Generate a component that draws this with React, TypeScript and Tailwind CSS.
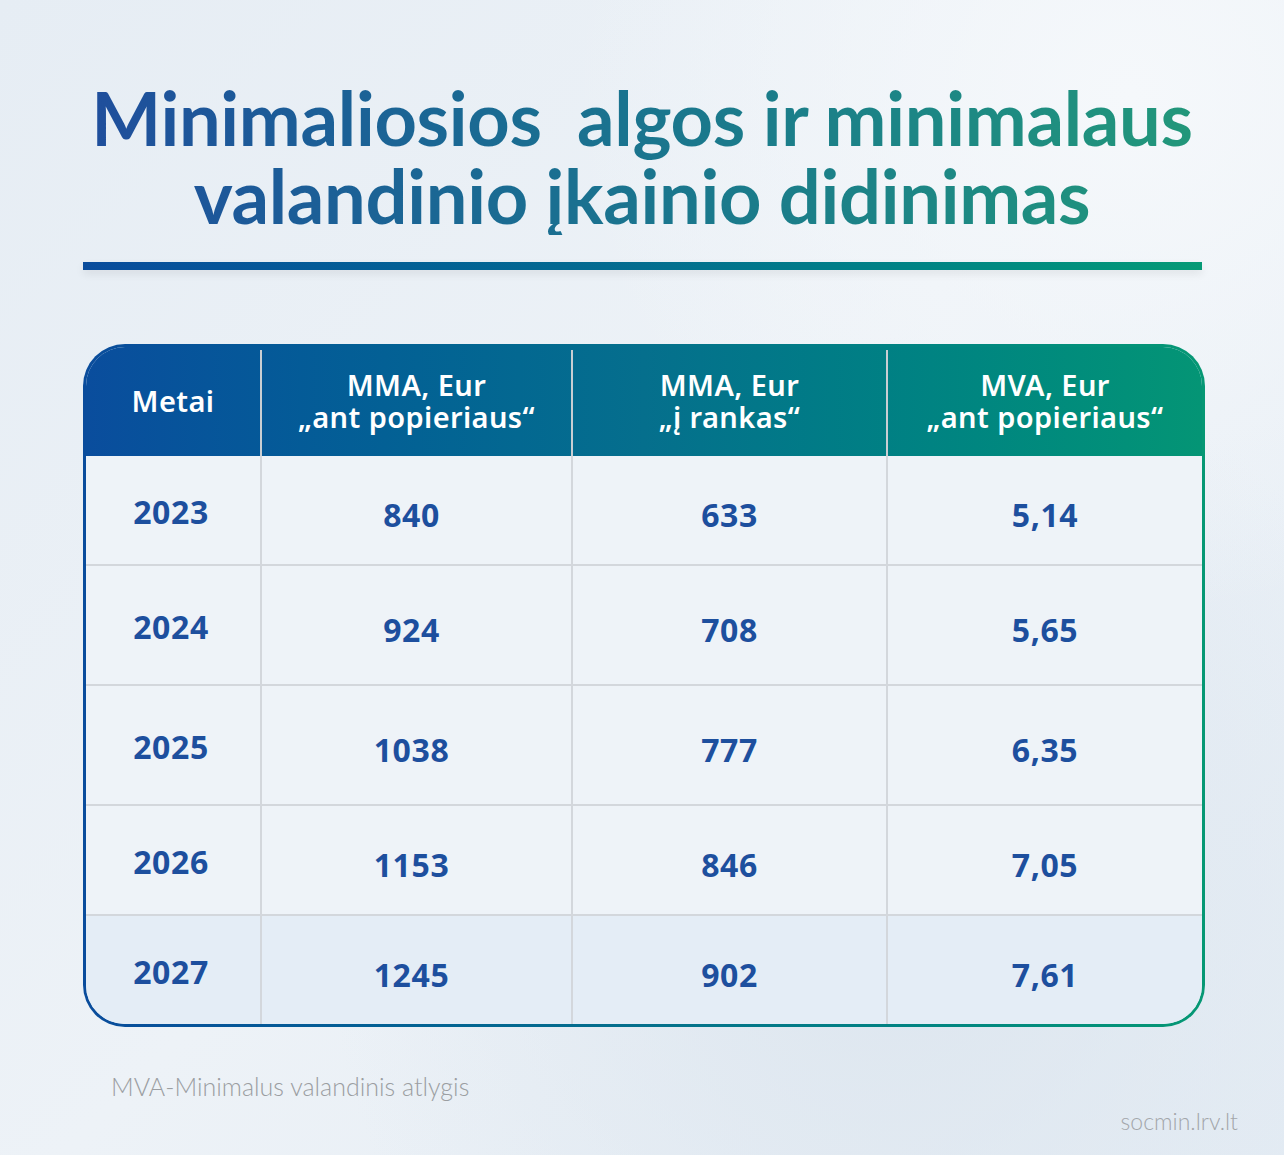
import { ReactNode } from "react";

type RowType = {
    year: string
    paper: string
    hands: string
    hourly: string
    h: string
}

const rows: RowType[] = [
    { year: "2023", paper: "840", hands: "633", hourly: "5,14", h: "h-[108px]" },
    { year: "2024", paper: "924", hands: "708", hourly: "5,65", h: "h-[120px]" },
    { year: "2025", paper: "1038", hands: "777", hourly: "6,35", h: "h-[120px]" },
    { year: "2026", paper: "1153", hands: "846", hourly: "7,05", h: "h-[110px]" },
    { year: "2027", paper: "1245", hands: "902", hourly: "7,61", h: "h-[110px]" },
]

const headers: string[][] = [
    ["Metai"],
    ["MMA, Eur", "„ant popieriaus“"],
    ["MMA, Eur", "„į rankas“"],
    ["MVA, Eur", "„ant popieriaus“"],
]

export default function App(): ReactNode {
    return (
        <div className="w-[1284px] h-[1155px] overflow-hidden bg-[radial-gradient(ellipse_at_88%_8%,#f5f8fb_0%,transparent_35%),radial-gradient(ellipse_at_70%_80%,#dde6ef_0%,transparent_45%),linear-gradient(135deg,#e6edf4,#edf2f7_50%,#e4ecf4)] font-['Lato',sans-serif]">
            {/* title */}
            <div className="pt-[79px] flex flex-col items-center">
                <h1 className="text-[74px] leading-[78px] font-bold text-center bg-gradient-to-r from-[#1f4e9c] to-[#22977a] bg-clip-text text-transparent tracking-[-0.3px]">
                    <span className="whitespace-pre">Minimaliosios  algos ir minimalaus</span>
                    <br />
                    valandinio įkainio didinimas
                </h1>
            </div>
            <div className="ml-[83px] mt-[27px] w-[1119px] h-[8px] bg-gradient-to-r from-[#0a4c9c] via-[#046d8f] to-[#069a76] shadow-[0_4px_8px_rgba(0,0,0,0.08)]"></div>

            {/* table */}
            <div className="ml-[83px] mt-[74px] w-[1122px] rounded-[42px] p-[3px] bg-gradient-to-r from-[#0a4c9c] via-[#05708c] to-[#069874]">
                <div className="rounded-[39px] overflow-hidden bg-[#eef3f8]">
                    <div className="grid grid-cols-[174px_311px_315px_1fr] h-[109px] bg-gradient-to-r from-[#0a4d9d] via-[#056f8d] to-[#049575] pt-[3px]">
                        {headers.map((lines, i) => (
                            <div key={i} className={"flex items-center justify-center text-center text-white text-[29px] leading-[32px] tracking-[0.4px] font-semibold font-['Noto_Sans',sans-serif] pb-[4px] " + (i > 0 ? "border-l-2 border-[#c9ced3]" : "")}>
                                <p>
                                    {lines[0]}
                                    {lines[1] && <br />}
                                    {lines[1]}
                                </p>
                            </div>
                        ))}
                    </div>
                    {rows.map((row, i) => (
                        <div key={row.year} className={"grid grid-cols-[174px_311px_315px_1fr] text-[#1d4f9e] text-[32px] tracking-[0.6px] font-bold font-['Noto_Sans',sans-serif] " + row.h + " " + (i > 0 ? "border-t-2 border-[#d3d7dc] " : "") + (i === 4 ? "bg-[#e4edf6]" : "")}>
                            <div className="flex items-center justify-center pt-[4px] pr-[4px]">{row.year}</div>
                            <div className="flex items-center justify-center border-l-2 border-[#d3d7dc] pt-[10px] pr-[10px]">{row.paper}</div>
                            <div className="flex items-center justify-center border-l-2 border-[#d3d7dc] pt-[10px]">{row.hands}</div>
                            <div className="flex items-center justify-center border-l-2 border-[#d3d7dc] pt-[10px]">{row.hourly}</div>
                        </div>
                    ))}
                </div>
            </div>

            {/* footer */}
            <div className="ml-[111px] mt-[41px] text-[25px] font-light text-[#9b9ea2]">MVA-Minimalus valandinis atlygis</div>
            <div className="mr-[46px] mt-[-2px] text-right text-[23px] font-light text-[#a3a6aa]">socmin.lrv.lt</div>
        </div>
    );
}
